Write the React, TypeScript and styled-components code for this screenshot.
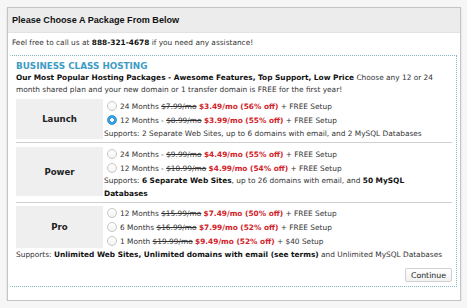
import React from "react";
import styled, { createGlobalStyle } from "styled-components";

const GlobalStyle = createGlobalStyle`
  html, body {
    margin: 0;
    padding: 0;
    background: #f6f6f6;
  }
  body {
    font-family: "DejaVu Sans", Verdana, sans-serif;
    font-size: 7.4px;
    color: #333;
  }
`;

const Frame = styled.div`
  box-sizing: border-box;
  margin: 7px 0 0 7px;
  width: 454px;
  height: 294px;
  background: #fff;
  border: 1px solid #c4c4c4;
  box-shadow: 0 1px 2px rgba(0, 0, 0, 0.12);
  display: flex;
  flex-direction: column;
`;

const Header = styled.div`
  height: 24px;
  line-height: 24px;
  padding-left: 4px;
  background: #ececec;
  border-bottom: 1px solid #e2e2e2;
  font-family: "Liberation Sans", Arial, sans-serif;
  font-weight: bold;
  font-size: 9.1px;
  color: #111;
`;

const Intro = styled.div`
  padding: 4px 4px 0;
  height: 18px;
  line-height: 12px;
  b {
    font-weight: bold;
    color: #111;
  }
`;

const Section = styled.div`
  box-sizing: border-box;
  margin: 0 3px 0 2px;
  height: 232px;
  border: 1px dotted #86b3c4;
  border-left-color: transparent;
  padding: 4px 4px 0 5px;
  display: flex;
  flex-direction: column;
`;

const Title = styled.div`
  font-size: 8.8px;
  font-weight: bold;
  line-height: 12px;
  color: #3d9cc4;
`;

const Blurb = styled.div`
  line-height: 12px;
  margin-bottom: 3px;
  white-space: nowrap;
  color: #333;
  b {
    color: #111;
  }
`;

const Package = styled.div`
  display: flex;
  align-items: flex-start;
`;

const NameBox = styled.div<{ $h: number }>`
  flex: 0 0 87px;
  height: ${(p) => p.$h}px;
  margin-right: 1px;
  background: #efefef;
  display: flex;
  align-items: center;
  justify-content: center;
  font-size: 8.6px;
  font-weight: bold;
  color: #222;
`;

const Options = styled.div`
  flex: 0 0 338px;
  display: flex;
  flex-direction: column;
`;

const OptionRow = styled.label`
  display: flex;
  align-items: center;
  height: 14px;
  padding-left: 3px;
  gap: 3px;
  white-space: nowrap;
`;

const Radio = styled.span<{ $on?: boolean }>`
  box-sizing: border-box;
  width: 10px;
  height: 10px;
  border-radius: 50%;
  flex: 0 0 10px;
  border: 1px solid ${(p) => (p.$on ? "#2f95d2" : "#c6c6c6")};
  background: ${(p) =>
    p.$on
      ? "radial-gradient(circle, #fff 0 1.6px, #3a9de0 2px)"
      : "linear-gradient(#fff, #f3f3f3)"};
`;

const Old = styled.span`
  text-decoration: line-through;
`;

const Deal = styled.span`
  color: #d2232a;
  font-weight: bold;
`;

const Supports = styled.div<{ $lh?: number }>`
  line-height: ${(p) => p.$lh ?? 13}px;
  b {
    color: #111;
  }
`;

const Divider = styled.hr<{ $after: number }>`
  border: 0;
  border-top: 1px solid #cfcfcf;
  margin: 2px 0 ${(p) => p.$after}px;
  width: 436px;
`;

const Footer = styled.div`
  display: flex;
  justify-content: flex-end;
  padding: 7px 2px 0 0;
  width: 436px;
`;

const Continue = styled.button`
  height: 14px;
  padding: 0 5px;
  border: 1px solid #d0d0d0;
  border-radius: 2px;
  background: linear-gradient(#fff, #f1f1f1);
  font-family: "DejaVu Sans", Verdana, sans-serif;
  font-size: 7.8px;
  color: #222;
`;

type Opt = { label: string; old: string; deal: string; setup: string; on?: boolean };

const Option = ({ o }: { o: Opt }) => (
  <OptionRow>
    <Radio $on={o.on} />
    <span>
      {o.label} <Old>{o.old}</Old> <Deal>{o.deal}</Deal> + {o.setup}
    </span>
  </OptionRow>
);

const launch: Opt[] = [
  { label: "24 Months", old: "$7.99/mo", deal: "$3.49/mo (56% off)", setup: "FREE Setup" },
  { label: "12 Months -", old: "$8.99/mo", deal: "$3.99/mo (55% off)", setup: "FREE Setup", on: true },
];

const power: Opt[] = [
  { label: "24 Months -", old: "$9.99/mo", deal: "$4.49/mo (55% off)", setup: "FREE Setup" },
  { label: "12 Months -", old: "$10.99/mo", deal: "$4.99/mo (54% off)", setup: "FREE Setup" },
];

const pro: Opt[] = [
  { label: "12 Months", old: "$15.99/mo", deal: "$7.49/mo (50% off)", setup: "FREE Setup" },
  { label: "6 Months", old: "$16.99/mo", deal: "$7.99/mo (52% off)", setup: "FREE Setup" },
  { label: "1 Month", old: "$19.99/mo", deal: "$9.49/mo (52% off)", setup: "$40 Setup" },
];

export default function App() {
  return (
    <>
      <GlobalStyle />
      <Frame>
        <Header>Please Choose A Package From Below</Header>
        <Intro>
          Feel free to call us at <b>888-321-4678</b> if you need any assistance!
        </Intro>
        <Section>
          <Title>BUSINESS CLASS HOSTING</Title>
          <Blurb>
            <b>Our Most Popular Hosting Packages - Awesome Features, Top Support, Low Price</b>{" "}
            Choose any 12 or 24
            <br />
            month shared plan and your new domain or 1 transfer domain is FREE for the first year!
          </Blurb>

          <Package>
            <NameBox $h={40}>Launch</NameBox>
            <Options>
              {launch.map((o) => (
                <Option key={o.label} o={o} />
              ))}
              <Supports>
                Supports: 2 Separate Web Sites, up to 6 domains with email, and 2 MySQL Databases
              </Supports>
            </Options>
          </Package>
          <Divider $after={4} />

          <Package>
            <NameBox $h={49}>Power</NameBox>
            <Options>
              {power.map((o) => (
                <Option key={o.label} o={o} />
              ))}
              <Supports $lh={12.5}>
                Supports: <b>6 Separate Web Sites</b>, up to 26 domains with email, and{" "}
                <b>50 MySQL</b>
                <br />
                <b>Databases</b>
              </Supports>
            </Options>
          </Package>
          <Divider $after={3} />

          <Package>
            <NameBox $h={42}>Pro</NameBox>
            <Options>
              {pro.map((o) => (
                <Option key={o.label} o={o} />
              ))}
            </Options>
          </Package>
          <Supports>
            Supports: <b>Unlimited Web Sites, Unlimited domains with email (see terms)</b> and
            Unlimited MySQL Databases
          </Supports>

          <Footer>
            <Continue>Continue</Continue>
          </Footer>
        </Section>
      </Frame>
    </>
  );
}
